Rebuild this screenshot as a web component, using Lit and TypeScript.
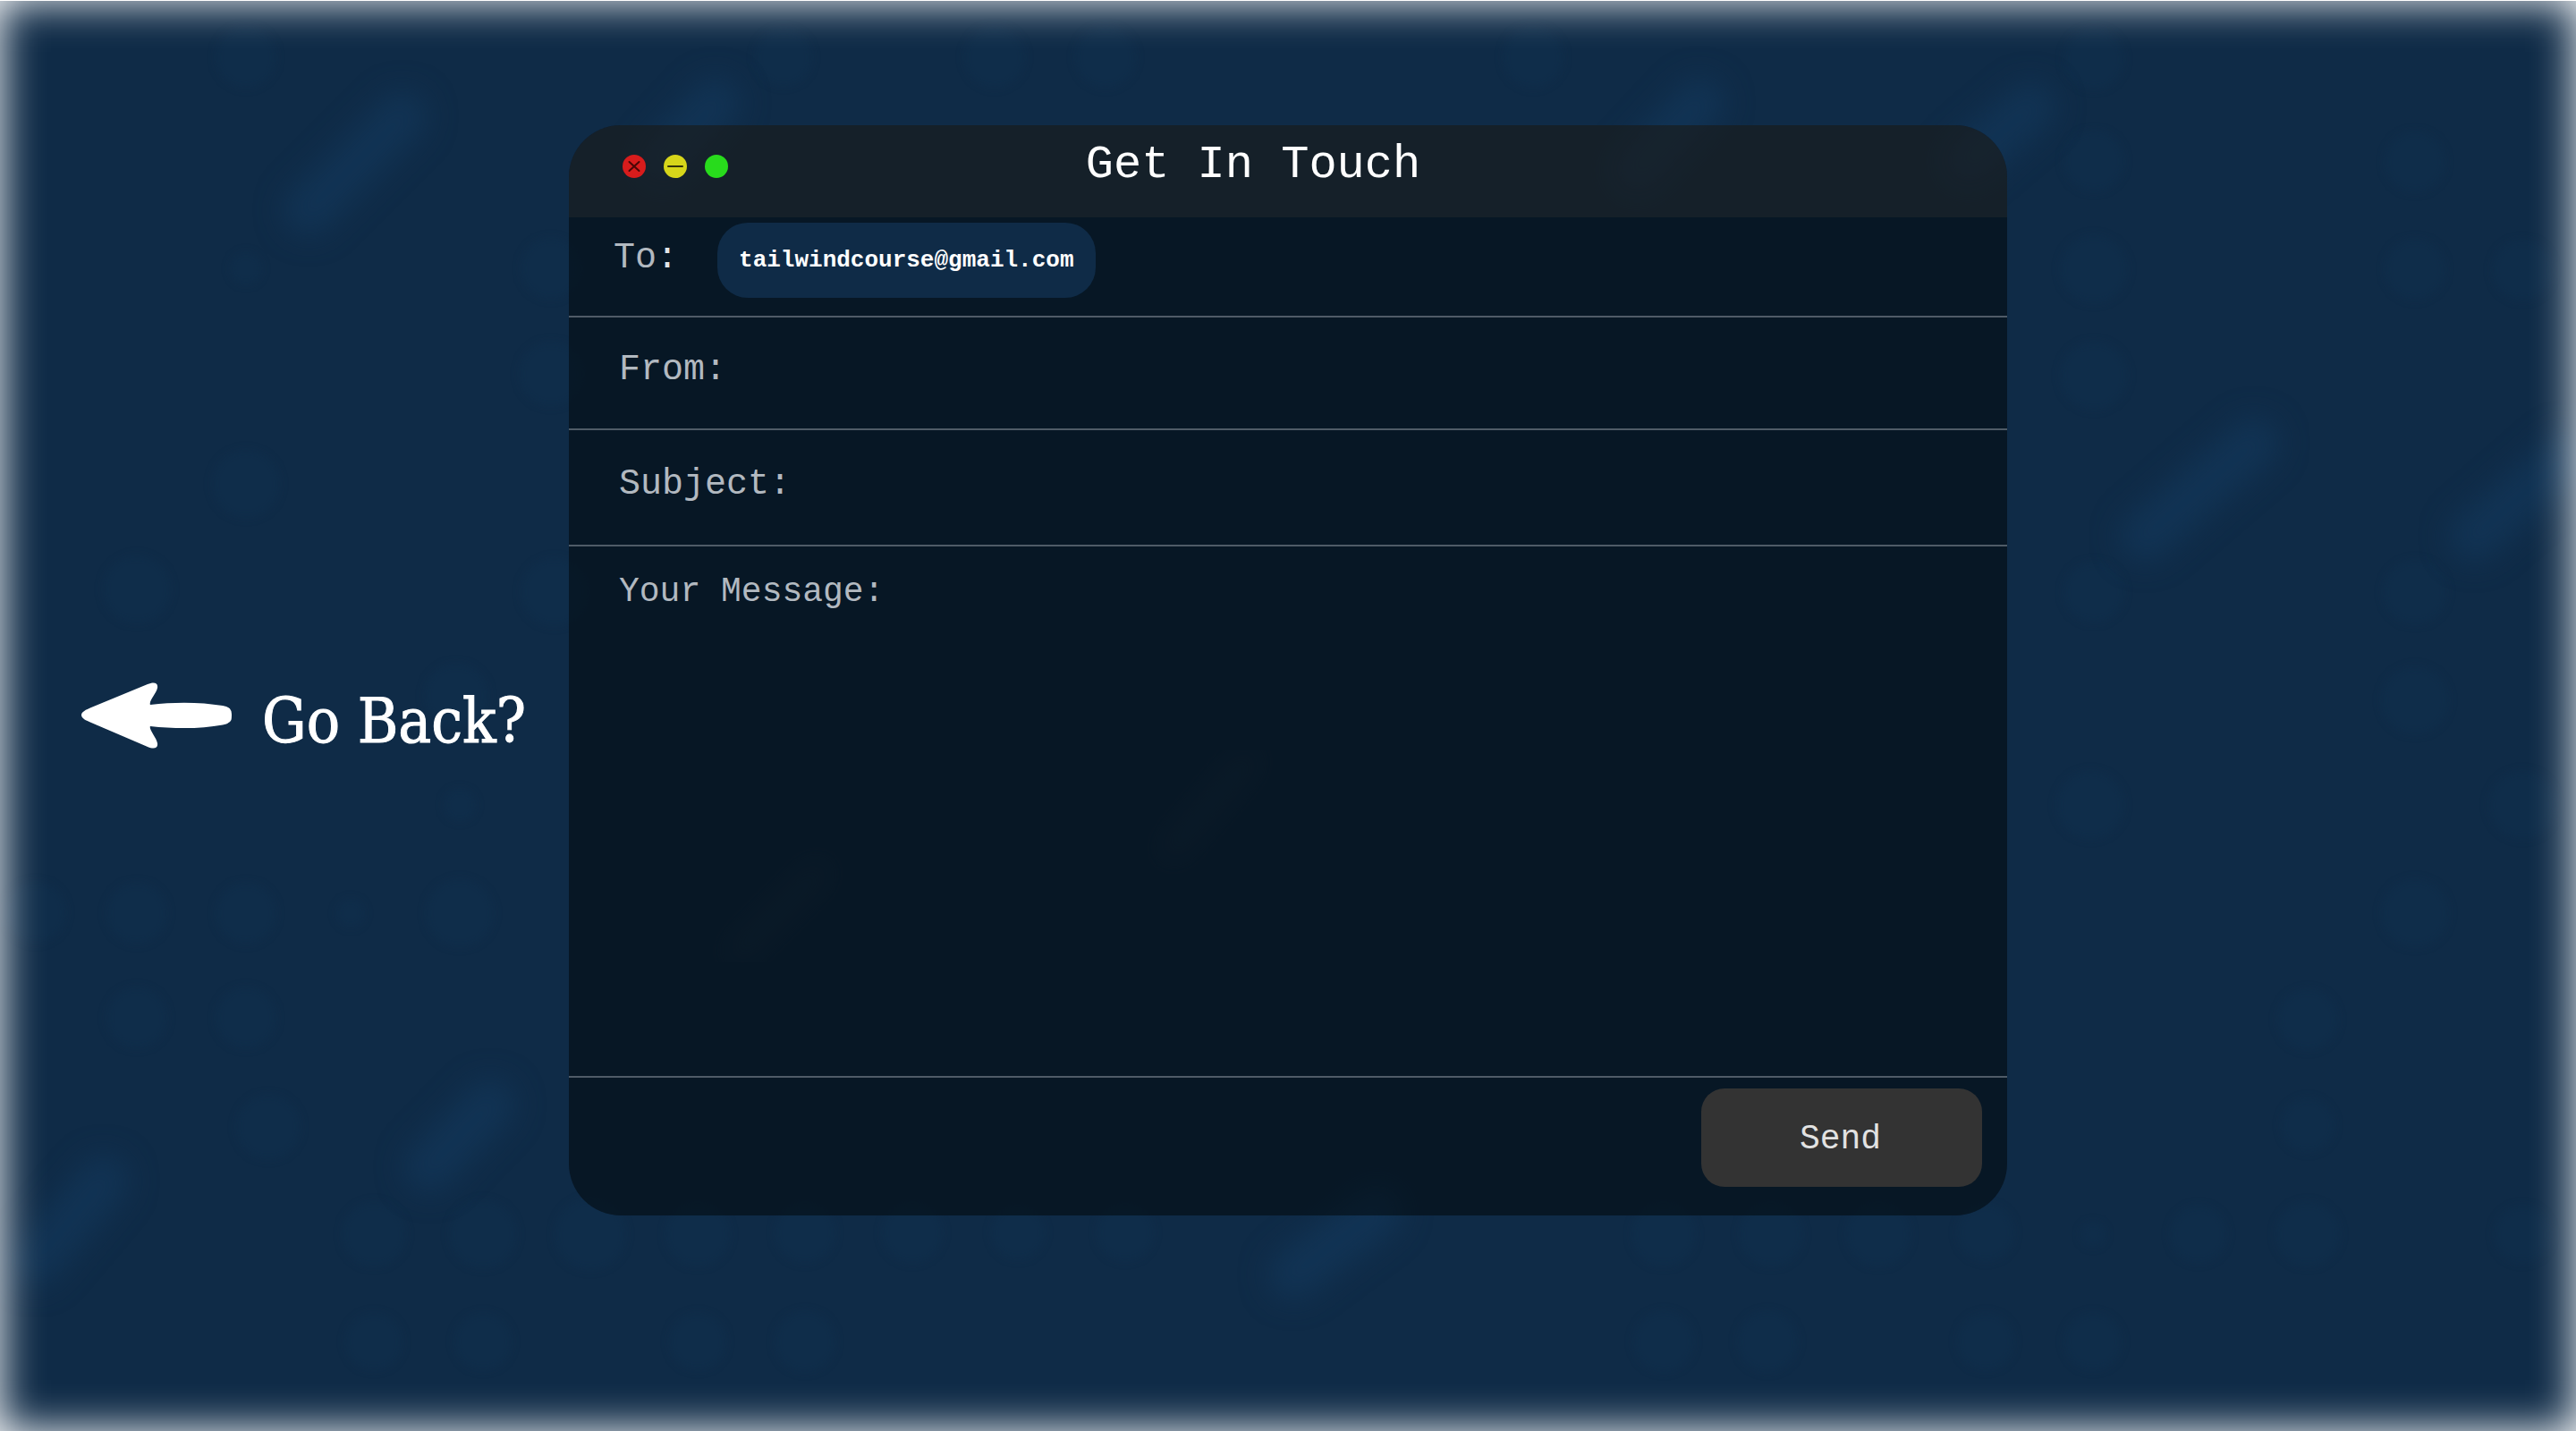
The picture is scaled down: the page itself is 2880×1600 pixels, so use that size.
import { LitElement, html, css, svg } from "lit";
import { customElement } from "lit/decorators.js";

type Spot = [number, number, number];
type Streak = [number, number, number, number];

const SPOTS: Spot[] = [
  [275, 64, 34], [876, 64, 32], [1112, 64, 34], [1236, 64, 34], [1714, 64, 34], [2341, 66, 34],
  [275, 300, 18], [616, 300, 34], [2341, 180, 34], [2341, 301, 38], [2341, 420, 38], [2700, 181, 34],
  [2700, 301, 34], [2820, 302, 34], [616, 418, 36], [275, 541, 38], [153, 659, 38], [620, 662, 38],
  [2341, 662, 34], [2700, 662, 36], [2700, 783, 38], [510, 778, 36], [2337, 900, 38], [2820, 900, 38],
  [514, 900, 18], [40, 1020, 34], [153, 1021, 34], [275, 1021, 34], [392, 1021, 16], [514, 1021, 38],
  [2700, 1021, 38], [153, 1138, 34], [275, 1138, 34], [2580, 1140, 34], [300, 1260, 36], [2580, 1258, 30],
  [418, 1380, 36], [540, 1380, 38], [660, 1380, 40], [780, 1380, 36], [900, 1378, 34], [1020, 1378, 34],
  [1138, 1378, 30], [1258, 1378, 32], [1860, 1380, 36], [1980, 1380, 36], [2100, 1380, 36], [2220, 1378, 32],
  [2340, 1380, 14], [2458, 1380, 32], [2580, 1380, 36], [2820, 1380, 32], [418, 1500, 32], [540, 1500, 32],
  [780, 1500, 32], [900, 1500, 34], [1860, 1500, 34], [1976, 1500, 34], [2220, 1500, 32], [2340, 1500, 32],
];

const STREAKS: Streak[] = [
  [345, 235, 450, 130], [2398, 600, 2520, 495], [2766, 600, 2870, 510], [40, 1410, 116, 1320],
  [480, 1305, 548, 1235], [1446, 1425, 1540, 1355], [2200, 180, 2270, 120], [740, 180, 800, 115],
  [1830, 190, 1900, 115],
];

const DIM_STREAKS: Streak[] = [
  [1310, 950, 1395, 850], [825, 1065, 915, 975],
];

@customElement("app-root")
export class AppRoot extends LitElement {
  static styles = css`
    :host {
      display: block;
      --mono: "Liberation Mono", monospace;
      --muted: #b2b9c0;
      --line: #4f5b67;
    }
    * {
      box-sizing: border-box;
    }
    .page {
      position: relative;
      display: grid;
      grid-template-columns: 1fr minmax(800px, 1608px) 1fr;
      min-height: 100vh;
      background: #0f2b47;
      font-family: var(--mono);
      overflow: hidden;
    }
    .backdrop {
      position: absolute;
      inset: 0;
      width: 100%;
      height: 100%;
    }
    .glow {
      position: absolute;
      inset: 0;
      border-top: 1px solid #fff;
      box-shadow: inset 0 0 48px #fff;
      pointer-events: none;
    }
    .back {
      position: relative;
      align-self: center;
      justify-self: end;
      display: flex;
      align-items: center;
      gap: 34px;
      margin-right: 48px;
      color: #fff;
      text-decoration: none;
      white-space: nowrap;
      font: 69px/80px "DejaVu Serif Condensed", "DejaVu Serif", serif;
      font-stretch: condensed;
      -webkit-text-stroke: 1px #fff;
    }
    .back-text {
      padding-top: 12px;
    }
    .arrow {
      width: 168px;
      height: 74px;
      fill: #fff;
    }
    .panel {
      position: relative;
      display: flex;
      flex-direction: column;
      margin: 140px 0 241px;
      border-radius: 58px;
      background: rgba(0, 3, 4, 0.5);
      overflow: hidden;
    }
    .bar {
      display: grid;
      grid-template-columns: 1fr auto 1fr;
      padding: 13px 60px 26px;
      background: rgba(51, 51, 51, 0.33);
    }
    .dots {
      display: flex;
      align-items: center;
      gap: 20px;
      padding-top: 2px;
    }
    .dot {
      width: 26px;
      height: 26px;
      padding: 0;
      border: 0;
      border-radius: 50%;
      background: #28db1c;
    }
    .dot.close {
      background: #d81c1c;
    }
    .dot.min {
      background: #d7d61a;
    }
    .dot svg {
      display: block;
      width: 26px;
      height: 26px;
      fill: none;
      stroke-width: 2;
      stroke-linecap: round;
    }
    .title {
      margin: 0;
      padding-right: 78px;
      color: #fff;
      font: 400 52px/64px var(--mono);
    }
    .row {
      display: flex;
      align-items: center;
      gap: 20px;
      padding: 0 28px 6px 56px;
      border-bottom: 2px solid var(--line);
      color: var(--muted);
      font-size: 40px;
      line-height: 44px;
    }
    .to {
      align-items: flex-start;
      gap: 44px;
      padding: 6px 28px 20px 50px;
    }
    .to-label {
      padding-top: 18px;
    }
    .colon {
      color: #e2e5e8;
    }
    .pill {
      padding: 25px 24px;
      border-radius: 34px;
      background: #0f2b47;
      color: #fff;
      font-weight: 700;
      font-size: 26px;
      line-height: 34px;
    }
    .field {
      flex: 1;
      min-width: 0;
      height: 118px;
      padding: 0;
      border: 0;
      outline: 0;
      background: transparent;
      color: #fff;
      font: inherit;
    }
    .subject .field {
      height: 122px;
    }
    .message {
      flex: 1;
      align-items: stretch;
      padding-top: 29px;
      font-size: 38px;
    }
    .message .field {
      height: auto;
      resize: none;
    }
    .foot {
      display: flex;
      justify-content: flex-end;
      padding: 12px 28px 32px;
    }
    .send {
      width: 314px;
      height: 110px;
      padding: 3px 3px 0 0;
      border: 0;
      border-radius: 26px;
      background: #333;
      color: #e2e2e2;
      font: 38px/44px var(--mono);
    }
  `;

  private backdrop() {
    const line = ([x1, y1, x2, y2]: Streak) =>
      svg`<line x1=${x1} y1=${y1} x2=${x2} y2=${y2}></line>`;
    return html`
      <svg class="backdrop" viewBox="0 0 2880 1600" preserveAspectRatio="xMidYMid slice" aria-hidden="true">
        <defs>
          <filter id="soft" x="-5%" y="-5%" width="110%" height="110%" color-interpolation-filters="sRGB"><feGaussianBlur stdDeviation="5" /></filter>
          <filter id="haze" x="-5%" y="-5%" width="110%" height="110%" color-interpolation-filters="sRGB"><feGaussianBlur stdDeviation="16" /></filter>
        </defs>
        <g fill="#0f3252" fill-opacity="0.32" filter="url(#soft)">
          ${SPOTS.map(([x, y, r]) => svg`<circle cx=${x} cy=${y} r=${r}></circle>`)}
        </g>
        <g stroke="#12385b" stroke-opacity="0.65" stroke-width="56" stroke-linecap="round" filter="url(#haze)">
          ${STREAKS.map(line)}
        </g>
        <g stroke="#1c3650" stroke-opacity="0.6" stroke-width="26" stroke-linecap="round" filter="url(#haze)">
          ${DIM_STREAKS.map(line)}
        </g>
      </svg>
    `;
  }

  render() {
    return html`
      <main class="page">
        ${this.backdrop()}
        <div class="glow"></div>
        <a class="back" href="#">
          <svg class="arrow" viewBox="0 0 168 74" aria-hidden="true">
            <path d="M0 36.500C0 33 5 30.500 11 28L74 2C80-.5 86-.5 85 6C84 12 75 21 77 25C105 21.500 134 22 158 26Q166 27 167.500 32Q168.500 37 167.500 42Q166 46 158 47.500C134 52 105 52 77 49C75 52 84 62 85 68C86 74.500 80 74.500 74 72L11 45C5 42.500 0 40 0 36.500Z" />
          </svg>
          <span class="back-text">Go Back?</span>
        </a>
        <form class="panel" @submit=${(e: Event) => e.preventDefault()}>
          <header class="bar">
            <div class="dots">
              <button class="dot close" type="button" aria-label="Close">
                <svg viewBox="0 0 26 26" stroke="#4a0606"><path d="M7.500 8 18.500 18M18.500 8 7.500 18" /></svg>
              </button>
              <button class="dot min" type="button" aria-label="Minimize">
                <svg viewBox="0 0 26 26" stroke="#33330a"><path d="M5 13H21" /></svg>
              </button>
              <button class="dot" type="button" aria-label="Maximize"></button>
            </div>
            <h1 class="title">Get In Touch</h1>
          </header>
          <div class="row to">
            <span class="to-label">To<span class="colon">:</span></span>
            <span class="pill">tailwindcourse@gmail.com</span>
          </div>
          <div class="row">
            <label for="from">From:</label>
            <input class="field" id="from" type="email" />
          </div>
          <div class="row subject">
            <label for="subject">Subject:</label>
            <input class="field" id="subject" type="text" />
          </div>
          <div class="row message">
            <label for="message">Your Message:</label>
            <textarea class="field" id="message"></textarea>
          </div>
          <footer class="foot">
            <button class="send" type="submit">Send</button>
          </footer>
        </form>
      </main>
    `;
  }
}
